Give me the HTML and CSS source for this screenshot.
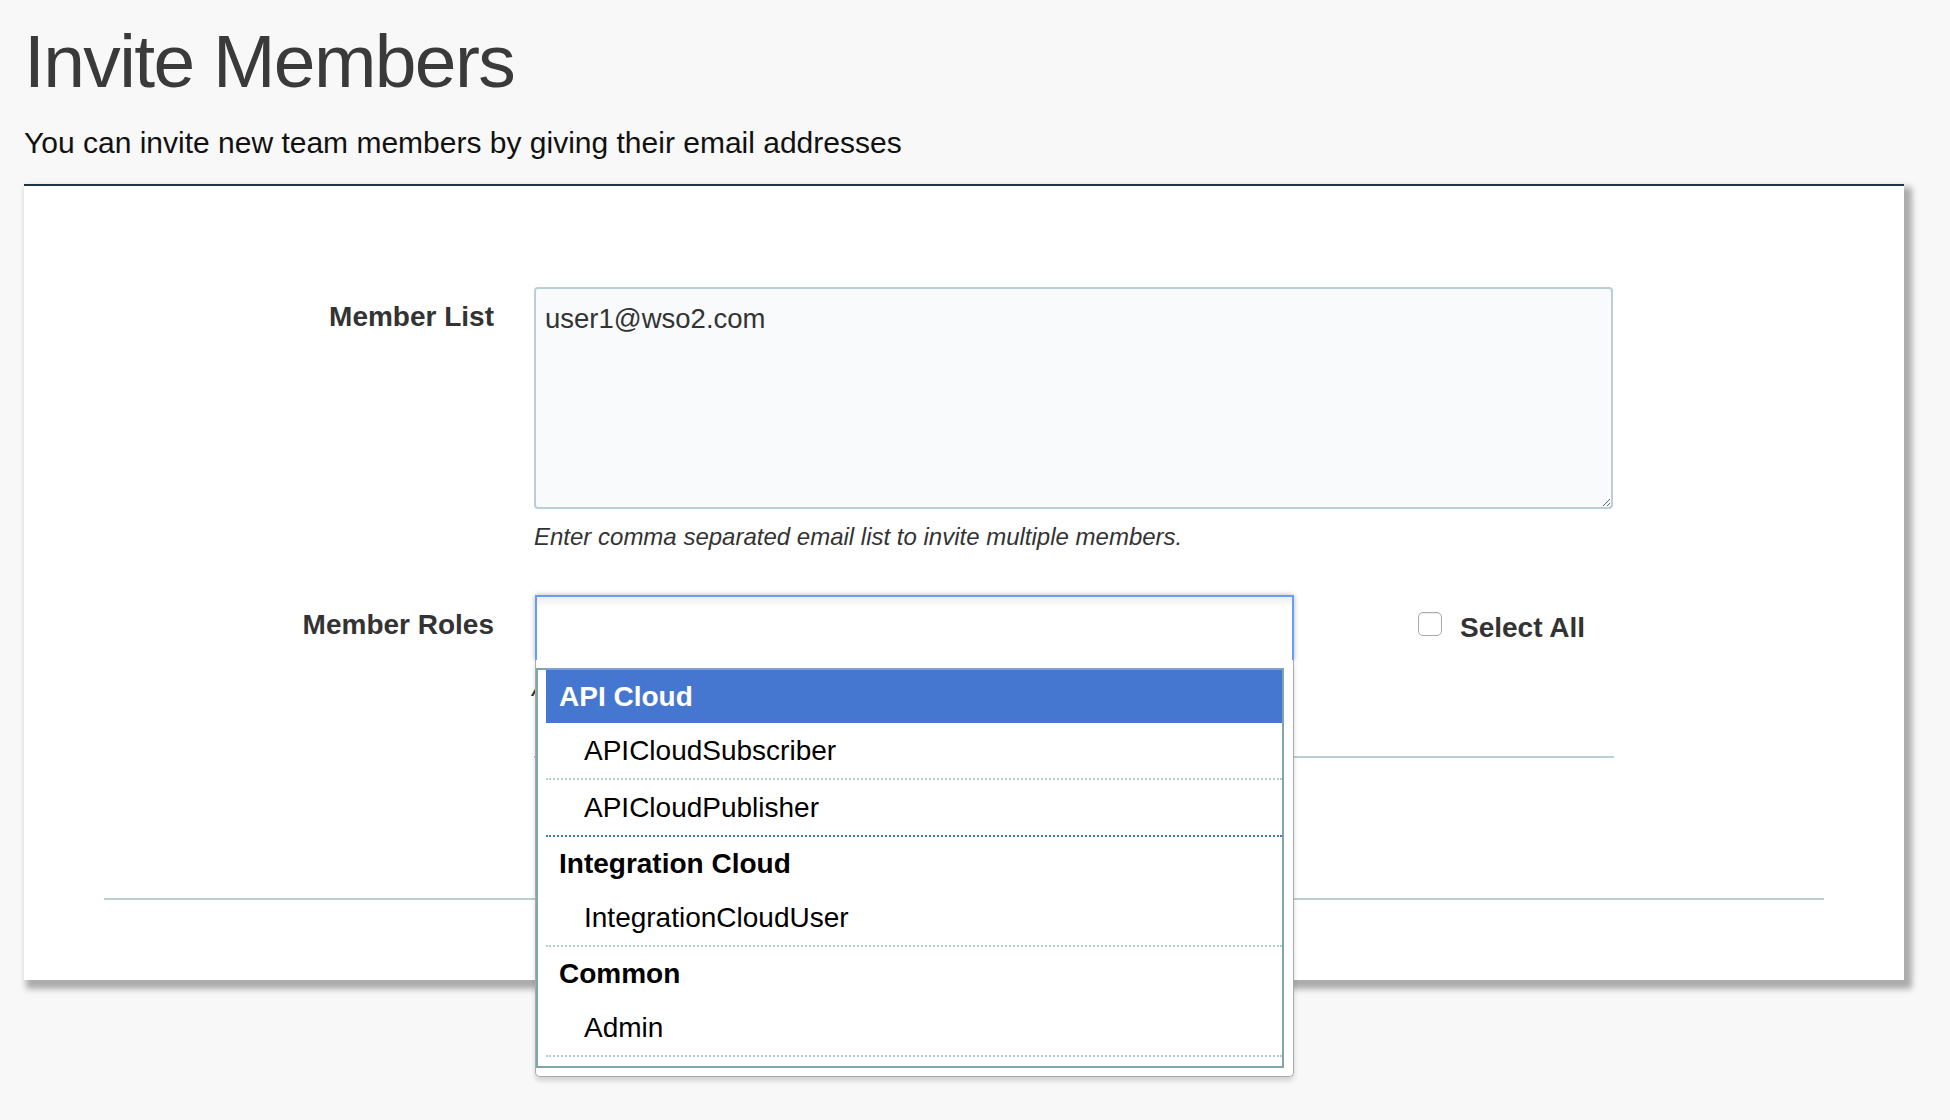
FILE: index.html
```html
<!DOCTYPE html>
<html lang="en">
<head>
<meta charset="utf-8">
<title>Invite Members</title>
<link rel="stylesheet" href="styles.css">
</head>
<body>
<div class="page">
  <h1 class="title">Invite Members</h1>
  <p class="subtitle">You can invite new team members by giving their email addresses</p>
  <div class="card">
    <div class="form-row row-members">
      <label class="form-label">Member List</label>
      <div class="field">
        <textarea class="member-input">user1@wso2.com</textarea>
        <p class="help">Enter comma separated email list to invite multiple members.</p>
      </div>
    </div>
    <div class="form-row row-roles">
      <label class="form-label">Member Roles</label>
      <div class="field field-roles">
        <div class="select-wrap">
          <div class="select-box"></div>
          <p class="help">Assign roles to the invited members.</p>
          <div class="dropdown">
            <ul class="results">
              <li class="group">
                <div class="group-label active">API Cloud</div>
                <ul class="options">
                  <li class="option">APICloudSubscriber</li>
                  <li class="option hover">APICloudPublisher</li>
                </ul>
              </li>
              <li class="group">
                <div class="group-label">Integration Cloud</div>
                <ul class="options">
                  <li class="option">IntegrationCloudUser</li>
                </ul>
              </li>
              <li class="group">
                <div class="group-label">Common</div>
                <ul class="options">
                  <li class="option">Admin</li>
                </ul>
              </li>
            </ul>
          </div>
        </div>
        <label class="select-all"><span class="check"></span><span class="select-all-text">Select All</span></label>
      </div>
    </div>
    <div class="divider divider-short"></div>
    <div class="divider divider-full"></div>
  </div>
</div>
</body>
</html>
```

FILE: styles.css
```css
html, body {
  margin: 0;
  padding: 0;
  background: #f8f8f8;
}

body {
  min-height: 100vh;
  font-family: "Liberation Sans", Arial, Helvetica, sans-serif;
  color: #333;
}

.page {
  min-height: 1120px;
  box-sizing: border-box;
  padding: 0 0 0 24px;
}

.title {
  margin: 24px 0 0 0;
  font-size: 75px;
  line-height: 75px;
  font-weight: normal;
  letter-spacing: -1.6px;
  color: #3a3a3a;
}

.subtitle {
  margin: 26px 0 0;
  font-size: 30px;
  line-height: 36px;
  color: #111;
}

.card {
  margin-top: 23px;
  width: 1880px;
  box-sizing: border-box;
  background: #fff;
  border-top: 2px solid #1e3446;
  box-shadow: 5px 6px 6px 3px #acacac;
  padding: 101px 80px 80px;
}

.form-row {
  display: flex;
  align-items: flex-start;
  gap: 40px;
}

.row-roles {
  margin-top: 42px;
}

.form-label {
  width: 390px;
  flex: none;
  text-align: right;
  font-size: 28px;
  line-height: 40px;
  font-weight: bold;
  color: #333;
  margin-top: 10px;
}

.field {
  flex: none;
}

.member-input {
  display: block;
  width: 1079px;
  height: 222px;
  box-sizing: border-box;
  margin: 0;
  padding: 10px 9px;
  border: 2px solid #b9cfd6;
  border-radius: 4px;
  background: #f8fafc;
  font-family: "Liberation Sans", Arial, Helvetica, sans-serif;
  font-size: 27.5px;
  line-height: 40px;
  color: #333;
  outline: none;
}

.help {
  margin: 12px 0 0;
  font-size: 24px;
  line-height: 32px;
  font-style: italic;
  color: #333;
}

.field-roles {
  display: flex;
  align-items: flex-start;
}

.select-wrap {
  position: relative;
  margin-left: 1px;
  width: 759px;
}

.select-box {
  height: 65px;
  box-sizing: border-box;
  border: 2px solid #6a9cf3;
  border-bottom: 0;
  background: linear-gradient(to bottom, #eee 1%, #fff 15%);
  box-shadow: 0 0 5px rgba(0, 0, 0, 0.3);
}

.select-wrap .help {
  margin-left: -3px;
}

.dropdown {
  position: absolute;
  top: 65px;
  left: 0;
  width: 759px;
  box-sizing: border-box;
  background: #fff;
  border: 1px solid #aaa;
  border-top: 0;
  border-radius: 0 0 5px 5px;
  padding: 8px 9px 8px 0;
  box-shadow: 0 4px 5px rgba(0, 0, 0, 0.15);
  z-index: 10;
}

.results {
  list-style: none;
  margin: 0;
  padding: 0 0 9px 8px;
  border: 2px solid #7fa6b0;
  background: #fff;
}

.group {
  margin: 0;
  padding: 0;
}

.group-label {
  height: 53px;
  line-height: 53px;
  padding-left: 13px;
  font-size: 28px;
  font-weight: bold;
  color: #000;
}

.group-label.active {
  background: #4677d0;
  color: #fff;
}

.options {
  list-style: none;
  margin: 0;
  padding: 0;
}

.option {
  height: 55px;
  line-height: 56px;
  padding-left: 38px;
  font-size: 28px;
  color: #000;
  border-bottom: 2px dotted #b3cdd6;
}

.option.hover {
  border-bottom-color: #4677d0;
}

.select-all {
  display: flex;
  align-items: flex-start;
  margin-left: 124px;
  margin-top: 13px;
}

.check {
  width: 24px;
  height: 24px;
  box-sizing: border-box;
  margin-top: 4px;
  border: 1px solid #aaa;
  border-radius: 5px;
  background: #fff;
  box-shadow: inset 0 1px 1px rgba(0, 0, 0, 0.08);
}

.select-all-text {
  margin-left: 18px;
  font-size: 28px;
  line-height: 40px;
  font-weight: bold;
  color: #333;
}

.divider {
  height: 2px;
  background: #b9cfd6;
}

.divider-short {
  margin-top: 52px;
  margin-left: 430px;
  width: 1080px;
}

.divider-full {
  margin-top: 140px;
}
```
